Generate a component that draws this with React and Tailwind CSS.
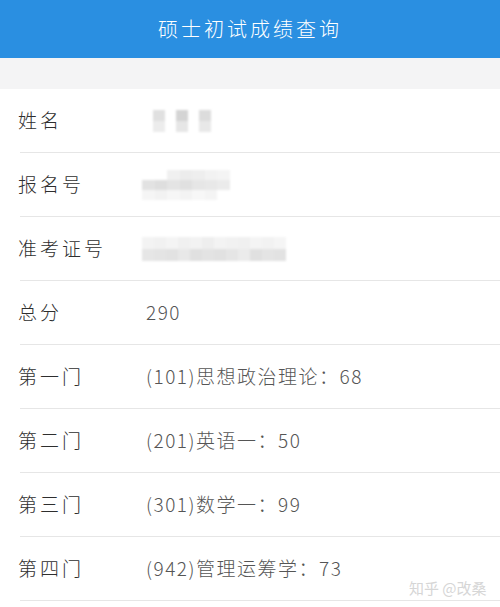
import React from "react";

// 马赛克块（打码的姓名 / 报名号 / 准考证号）
function Mosaic({ rows, cell }) {
  return (
    <div className="flex flex-col blur-[1px]">
      {rows.map((row, i) => (
        <div key={i} className="flex">
          {row.map((c, j) => (
            <div key={j} className={`${cell} ${c}`} />
          ))}
        </div>
      ))}
    </div>
  );
}

const nameRows = [
  ["bg-[#e0e0e0]", "bg-white", "bg-[#d4d4d4]", "bg-white", "bg-[#dcdcdc]"],
  ["bg-[#ececec]", "bg-white", "bg-[#e6e6e6]", "bg-white", "bg-[#e8e8e8]"],
];

const regRows = [
  ["bg-white", "bg-white", "bg-[#f0f0f0]", "bg-[#ececec]", "bg-[#eeeeee]", "bg-[#f2f2f2]", "bg-[#f4f4f4]"],
  ["bg-[#e2e2e2]", "bg-[#dedede]", "bg-[#e4e4e4]", "bg-[#e0e0e0]", "bg-[#e6e6e6]", "bg-[#e8e8e8]", "bg-[#ebebeb]"],
  ["bg-[#f5f5f5]", "bg-[#f2f2f2]", "bg-[#f6f6f6]", "bg-[#f3f3f3]", "bg-[#f7f7f7]", "bg-[#f4f4f4]", "bg-white"],
];

const idRows = [
  ["bg-[#f3f3f3]", "bg-[#f1f1f1]", "bg-[#f4f4f4]", "bg-[#f0f0f0]", "bg-[#f2f2f2]", "bg-[#eeeeee]", "bg-[#f3f3f3]", "bg-[#f1f1f1]", "bg-[#f0f0f0]", "bg-[#f4f4f4]", "bg-[#f2f2f2]", "bg-[#f5f5f5]"],
  ["bg-[#e6e6e6]", "bg-[#e4e4e4]", "bg-[#e2e2e2]", "bg-[#e8e8e8]", "bg-[#e0e0e0]", "bg-[#e3e3e3]", "bg-[#e1e1e1]", "bg-[#e5e5e5]", "bg-[#ebebeb]", "bg-[#e0e0e0]", "bg-[#e4e4e4]", "bg-[#e2e2e2]"],
];

const rows = [
  { label: "姓名", value: <div className="ml-[7px]"><Mosaic rows={nameRows} cell="w-[11.5px] h-[11px]" /></div> },
  { label: "报名号", value: <div className="-ml-[4px]"><Mosaic rows={regRows} cell="w-[12.5px] h-[10px]" /></div> },
  { label: "准考证号", value: <div className="-ml-[4px]"><Mosaic rows={idRows} cell="w-[12px] h-[12px]" /></div> },
  { label: "总分", value: "290" },
  { label: "第一门", value: "(101)思想政治理论：68" },
  { label: "第二门", value: "(201)英语一：50" },
  { label: "第三门", value: "(301)数学一：99" },
  { label: "第四门", value: "(942)管理运筹学：73" },
];

export default function App() {
  return (
    <div className="w-[500px] h-[607px] bg-white overflow-hidden relative font-['Noto_Sans_CJK_SC','Noto_Sans',sans-serif]">
      {/* 标题栏 */}
      <div className="h-[58px] bg-[#2a8fe1] flex items-center justify-center">
        <span className="text-white text-[20px] tracking-[3px] font-light">硕士初试成绩查询</span>
      </div>

      {/* 灰色间隔 */}
      <div className="h-[31px] bg-[#f4f4f5]" />

      {/* 成绩列表 */}
      <div className="pl-[20px]">
        {rows.map((r) => (
          <div key={r.label} className="h-[64px] flex items-center border-b border-[#e6e6e6]">
            <div className="w-[128px] -ml-[2px] text-[19px] tracking-[3px] text-[#2e2e2e] font-light">{r.label}</div>
            <div className="text-[19px] tracking-[1.5px] text-[#555555] font-light">{r.value}</div>
          </div>
        ))}
      </div>

      {/* 水印 */}
      <div className="absolute left-[409px] top-[577px] text-[15px] text-[#d6d6d6] font-['Noto_Sans_CJK_SC',sans-serif]">
        知乎 @改桑
      </div>
    </div>
  );
}
